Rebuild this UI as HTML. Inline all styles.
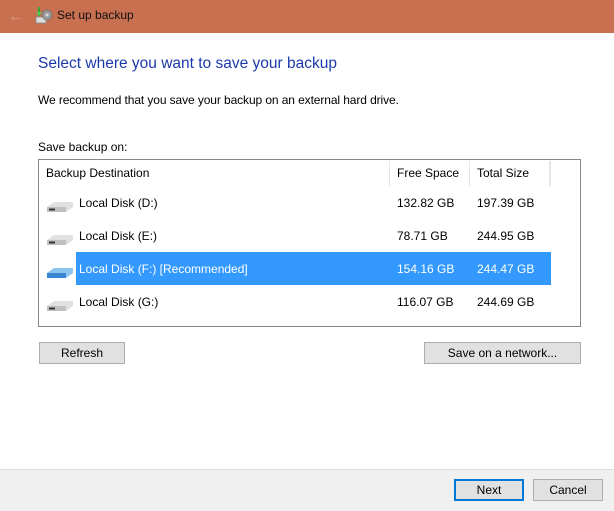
<!DOCTYPE html>
<html><head><style>
body{margin:0;width:614px;height:510px;position:relative;background:#fff;font-family:"Liberation Sans",sans-serif;font-size:12px;color:#000;overflow:hidden}
.a{position:absolute;white-space:nowrap}
.btn{position:absolute;background:#e1e1e1;border:1px solid #adadad;box-sizing:border-box;text-align:center;font-size:12px}
.hd{position:absolute;top:1px;height:25px;border-right:1px solid #e5e5e5;line-height:25px;padding-left:7px;box-sizing:border-box}
.row{position:absolute;left:1px;width:540px;height:33px}
.disk{position:absolute;left:6px;top:14px}
</style></head><body>
<div class="a" style="left:0;top:0;width:614px;height:33px;background:#c87050"></div>
<div class="a" style="left:8px;top:8px;color:#d99a80;font-size:16px">&#8592;</div>
<svg class="a" style="left:35px;top:6px" width="18" height="18" viewBox="0 0 18 18"><rect x="3" y="1" width="2" height="9" fill="#3a3"/><path d="M1 6 L4 10 L7 6" fill="#5c5"/><rect x="1" y="11" width="10" height="6" fill="#ddd" stroke="#888" stroke-width=".8"/><circle cx="12" cy="9" r="5" fill="#999" stroke="#666" stroke-width=".6"/><circle cx="12" cy="9" r="1.5" fill="#ddd"/></svg>
<div class="a" style="left:57px;top:8px;font-size:12px;color:#111">Set up backup</div>
<div class="a" style="left:38px;top:55px;font-size:15.5px;color:#1c3aa9">Select where you want to save your backup</div>
<div class="a" style="left:38px;top:93px;letter-spacing:-0.1px">We recommend that you save your backup on an external hard drive.</div>
<div class="a" style="left:38px;top:140px">Save backup on:</div>
<div class="a" style="left:38px;top:159px;width:543px;height:168px;border:1px solid #828790;box-sizing:border-box">
<div class="hd" style="left:0;width:351px">Backup Destination</div>
<div class="hd" style="left:351px;width:80px">Free Space</div>
<div class="hd" style="left:431px;width:80px">Total Size</div>
<div class="hd" style="left:511px;width:1px;padding:0"></div>
<div class="row" style="top:27px"><svg class="disk" width="28" height="12"><path d="M1 6 L8 1 L27 1 L27 6 L20 11 L1 11Z" fill="#e0e0e0"/><path d="M1 6 L20 6 L20 11 L1 11Z" fill="#c0c0c0"/><rect x="3" y="7.5" width="6" height="2" fill="#333"/></svg><span class="a" style="left:39px;top:9px">Local Disk (D:)</span><span class="a" style="left:357px;top:9px">132.82 GB</span><span class="a" style="left:437px;top:9px">197.39 GB</span></div>
<div class="row" style="top:60px"><svg class="disk" width="28" height="12"><path d="M1 6 L8 1 L27 1 L27 6 L20 11 L1 11Z" fill="#e0e0e0"/><path d="M1 6 L20 6 L20 11 L1 11Z" fill="#c0c0c0"/><rect x="3" y="7.5" width="6" height="2" fill="#333"/></svg><span class="a" style="left:39px;top:9px">Local Disk (E:)</span><span class="a" style="left:357px;top:9px">78.71 GB</span><span class="a" style="left:437px;top:9px">244.95 GB</span></div>
<div class="row" style="top:92px"><div class="a" style="left:36px;top:0;width:475px;height:33px;background:#3399ff"></div><svg class="disk" width="28" height="12" style="top:15px"><path d="M1 6 L8 1 L27 1 L27 6 L20 11 L1 11Z" fill="#8cc4f0"/><path d="M1 6 L20 6 L20 11 L1 11Z" fill="#3a86d0"/></svg><span class="a" style="left:39px;top:10px;color:#fff">Local Disk (F:) [Recommended]</span><span class="a" style="left:357px;top:10px;color:#fff">154.16 GB</span><span class="a" style="left:437px;top:10px;color:#fff">244.47 GB</span></div>
<div class="row" style="top:126px"><svg class="disk" width="28" height="12"><path d="M1 6 L8 1 L27 1 L27 6 L20 11 L1 11Z" fill="#e0e0e0"/><path d="M1 6 L20 6 L20 11 L1 11Z" fill="#c0c0c0"/><rect x="3" y="7.5" width="6" height="2" fill="#333"/></svg><span class="a" style="left:39px;top:9px">Local Disk (G:)</span><span class="a" style="left:357px;top:9px">116.07 GB</span><span class="a" style="left:437px;top:9px">244.69 GB</span></div>
</div>
<div class="btn" style="left:39px;top:342px;width:86px;height:22px;line-height:20px">Refresh</div>
<div class="btn" style="left:424px;top:342px;width:157px;height:22px;line-height:20px">Save on a network...</div>
<div class="a" style="left:0;top:469px;width:614px;height:41px;background:#f0f0f0;border-top:1px solid #dfdfdf"></div>
<div class="btn" style="left:454px;top:479px;width:70px;height:22px;line-height:18px;border:2px solid #0078d7">Next</div>
<div class="btn" style="left:533px;top:479px;width:70px;height:22px;line-height:20px">Cancel</div>
</body></html>
